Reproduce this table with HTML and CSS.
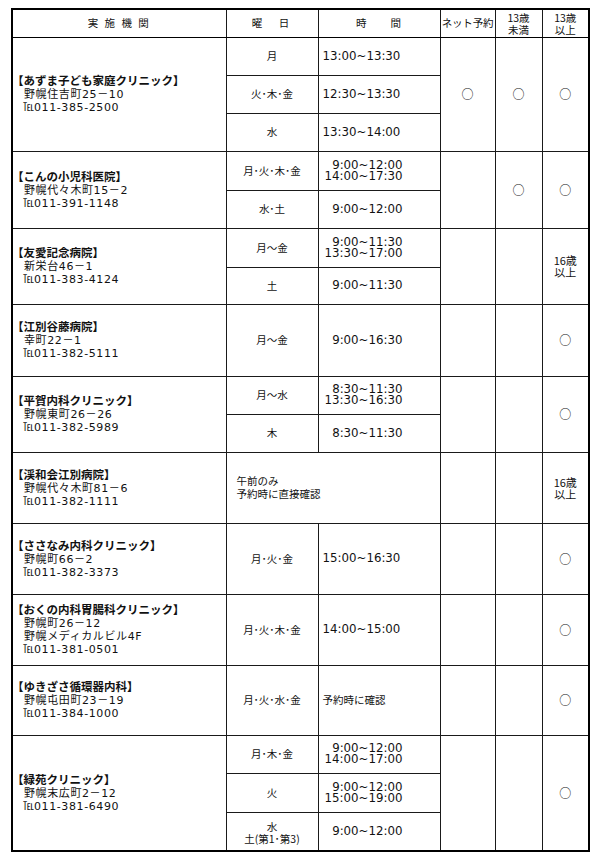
FILE: index.html
```html
<!DOCTYPE html>
<html lang="ja">
<head>
<meta charset="utf-8">
<title>実施機関一覧</title>
<link rel="stylesheet" href="styles.css">
</head>
<body>
<div class="sheet">
<table class="grid">
  <colgroup>
    <col class="c1"><col class="c2"><col class="c3"><col class="c4"><col class="c5"><col class="c6">
  </colgroup>
  <thead>
    <tr class="r28">
      <th class="h-inst">実 施 機 関</th>
      <th class="h-day">曜　日</th>
      <th class="h-time">時　　間</th>
      <th class="h-net">ネット予約</th>
      <th class="h-age"><div>13歳</div><div>未満</div></th>
      <th class="h-age"><div>13歳</div><div>以上</div></th>
    </tr>
  </thead>
  <tbody>
    <!-- あずま -->
    <tr class="r38">
      <td class="inst" rowspan="3">
        <div class="name">【あずま子ども家庭クリニック】</div>
        <div class="addr">野幌住吉町25－10</div>
        <div class="addr"><span class="tel">℡</span>011-385-2500</div>
      </td>
      <td class="day">月</td>
      <td class="time left">13:00~13:30</td>
      <td class="mark" rowspan="3">○</td>
      <td class="mark" rowspan="3">○</td>
      <td class="mark" rowspan="3">○</td>
    </tr>
    <tr class="r38">
      <td class="day sub">火･木･金</td>
      <td class="time left sub">12:30~13:30</td>
    </tr>
    <tr class="r38">
      <td class="day sub">水</td>
      <td class="time left sub">13:30~14:00</td>
    </tr>

    <!-- こんの -->
    <tr class="r39">
      <td class="inst" rowspan="2">
        <div class="name">【こんの小児科医院】</div>
        <div class="addr">野幌代々木町15－2</div>
        <div class="addr"><span class="tel">℡</span>011-391-1148</div>
      </td>
      <td class="day">月･火･木･金</td>
      <td class="time"><div>9:00~12:00</div><div>14:00~17:30</div></td>
      <td class="mark" rowspan="2"></td>
      <td class="mark" rowspan="2">○</td>
      <td class="mark" rowspan="2">○</td>
    </tr>
    <tr class="r38">
      <td class="day sub">水･土</td>
      <td class="time sub">9:00~12:00</td>
    </tr>

    <!-- 友愛 -->
    <tr class="r39">
      <td class="inst" rowspan="2">
        <div class="name">【友愛記念病院】</div>
        <div class="addr">新栄台46－1</div>
        <div class="addr"><span class="tel">℡</span>011-383-4124</div>
      </td>
      <td class="day">月～金</td>
      <td class="time"><div>9:00~11:30</div><div>13:30~17:00</div></td>
      <td class="mark" rowspan="2"></td>
      <td class="mark" rowspan="2"></td>
      <td class="mark age" rowspan="2"><div>16歳</div><div>以上</div></td>
    </tr>
    <tr class="r37">
      <td class="day sub">土</td>
      <td class="time sub">9:00~11:30</td>
    </tr>

    <!-- 江別谷藤 -->
    <tr class="r72">
      <td class="inst">
        <div class="name">【江別谷藤病院】</div>
        <div class="addr">幸町22－1</div>
        <div class="addr"><span class="tel">℡</span>011-382-5111</div>
      </td>
      <td class="day">月～金</td>
      <td class="time">9:00~16:30</td>
      <td class="mark"></td>
      <td class="mark"></td>
      <td class="mark">○</td>
    </tr>

    <!-- 平賀 -->
    <tr class="r38">
      <td class="inst" rowspan="2">
        <div class="name">【平賀内科クリニック】</div>
        <div class="addr">野幌東町26－26</div>
        <div class="addr"><span class="tel">℡</span>011-382-5989</div>
      </td>
      <td class="day">月～水</td>
      <td class="time"><div>8:30~11:30</div><div>13:30~16:30</div></td>
      <td class="mark" rowspan="2"></td>
      <td class="mark" rowspan="2"></td>
      <td class="mark" rowspan="2">○</td>
    </tr>
    <tr class="r38">
      <td class="day sub">木</td>
      <td class="time sub">8:30~11:30</td>
    </tr>

    <!-- 渓和会 -->
    <tr class="r71">
      <td class="inst">
        <div class="name">【渓和会江別病院】</div>
        <div class="addr">野幌代々木町81－6</div>
        <div class="addr"><span class="tel">℡</span>011-382-1111</div>
      </td>
      <td class="memo" colspan="2"><div>午前のみ</div><div>予約時に直接確認</div></td>
      <td class="mark"></td>
      <td class="mark"></td>
      <td class="mark age"><div>16歳</div><div>以上</div></td>
    </tr>

    <!-- ささなみ -->
    <tr class="r71">
      <td class="inst">
        <div class="name">【ささなみ内科クリニック】</div>
        <div class="addr">野幌町66－2</div>
        <div class="addr"><span class="tel">℡</span>011-382-3373</div>
      </td>
      <td class="day">月･火･金</td>
      <td class="time left">15:00~16:30</td>
      <td class="mark"></td>
      <td class="mark"></td>
      <td class="mark">○</td>
    </tr>

    <!-- おくの -->
    <tr class="r71">
      <td class="inst">
        <div class="name">【おくの内科胃腸科クリニック】</div>
        <div class="addr">野幌町26－12</div>
        <div class="addr">野幌メディカルビル4F</div>
        <div class="addr"><span class="tel">℡</span>011-381-0501</div>
      </td>
      <td class="day">月･火･木･金</td>
      <td class="time left">14:00~15:00</td>
      <td class="mark"></td>
      <td class="mark"></td>
      <td class="mark">○</td>
    </tr>

    <!-- ゆきざさ -->
    <tr class="r70">
      <td class="inst">
        <div class="name">【ゆきざさ循環器内科】</div>
        <div class="addr">野幌屯田町23－19</div>
        <div class="addr"><span class="tel">℡</span>011-384-1000</div>
      </td>
      <td class="day">月･火･水･金</td>
      <td class="note">予約時に確認</td>
      <td class="mark"></td>
      <td class="mark"></td>
      <td class="mark">○</td>
    </tr>

    <!-- 緑苑 -->
    <tr class="r38">
      <td class="inst" rowspan="3">
        <div class="name">【緑苑クリニック】</div>
        <div class="addr">野幌末広町2－12</div>
        <div class="addr"><span class="tel">℡</span>011-381-6490</div>
      </td>
      <td class="day">月･木･金</td>
      <td class="time"><div>9:00~12:00</div><div>14:00~17:00</div></td>
      <td class="mark" rowspan="3"></td>
      <td class="mark" rowspan="3"></td>
      <td class="mark" rowspan="3">○</td>
    </tr>
    <tr class="r39">
      <td class="day sub">火</td>
      <td class="time sub"><div>9:00~12:00</div><div>15:00~19:00</div></td>
    </tr>
    <tr class="r39">
      <td class="day sub two"><div>水</div><div>土(第1･第3)</div></td>
      <td class="time sub">9:00~12:00</td>
    </tr>
  </tbody>
</table>
</div>
</body>
</html>
```

FILE: styles.css
```css
html, body {
  margin: 0;
  padding: 0;
  background: #ffffff;
}

body {
  font-family: "Noto Sans CJK JP", sans-serif;
  color: #111111;
}

.sheet {
  padding: 8px 0 0 11px;
}

.grid {
  border-collapse: collapse;
  table-layout: fixed;
  width: 579px;
  border: 2px solid #000000;
}

.c1 { width: 214px; }
.c2 { width: 92px; }
.c3 { width: 122px; }
.c4 { width: 55px; }
.c5 { width: 47px; }
.c6 { width: 47px; }

.grid th,
.grid td {
  border: 1px solid #1a1a1a;
  padding: 0;
  font-weight: normal;
  font-size: 10.5px;
  line-height: 12px;
  text-align: center;
  vertical-align: middle;
  overflow: hidden;
}

.r28 { height: 28px; }
.r37 { height: 37px; }
.r38 { height: 38px; }
.r39 { height: 39px; }
.r70 { height: 70px; }
.r71 { height: 71px; }
.r72 { height: 72px; }

/* header */
.grid thead th {
  border-bottom: 1px solid #000000;
}

.h-inst {
  letter-spacing: 2px;
}

.h-day {
  letter-spacing: 3px;
  padding-left: 3px;
}

.h-time {
  font-size: 11px;
  letter-spacing: 1px;
}

.h-net {
  font-size: 9.5px;
  letter-spacing: -0.2px;
}

.grid .h-age {
  font-size: 10.5px;
  line-height: 12px;
  padding-top: 1px;
}

/* institution */
.grid .inst {
  text-align: left;
  padding-left: 1px;
}

.name {
  font-weight: 700;
  font-size: 11.5px;
  line-height: 13px;
  margin-left: -2px;
  margin-bottom: 1px;
  white-space: nowrap;
}

.addr {
  font-family: "DejaVu Sans", "Noto Sans CJK JP", sans-serif;
  font-size: 11px;
  line-height: 13px;
  letter-spacing: 0.6px;
  padding-left: 10px;
  white-space: nowrap;
}

.tel {
  font-family: "Noto Sans CJK JP", sans-serif;
  letter-spacing: 0;
  line-height: 0;
  margin-left: -1px;
}

/* day */
.grid .day {
  font-size: 10.5px;
}

.grid .day.two {
  line-height: 12px;
  padding-top: 3px;
}

/* time */
.grid .time {
  font-family: "DejaVu Sans", sans-serif;
  font-size: 11.8px;
  line-height: 11px;
  text-align: right;
  padding-right: 37px;
  white-space: nowrap;
}

.grid .time.left {
  text-align: left;
  padding-left: 4px;
  padding-right: 0;
}

.grid .sub {
  border-top: 1px solid #666666;
}

.grid .memo {
  text-align: left;
  padding-left: 10px;
  font-size: 10.5px;
  line-height: 12.5px;
}

.grid .note {
  text-align: left;
  padding-left: 4px;
  font-size: 10.5px;
}

.grid .mark {
  font-size: 12px;
  line-height: 12px;
}

.grid .mark.age {
  font-size: 11px;
  line-height: 12px;
}
```
